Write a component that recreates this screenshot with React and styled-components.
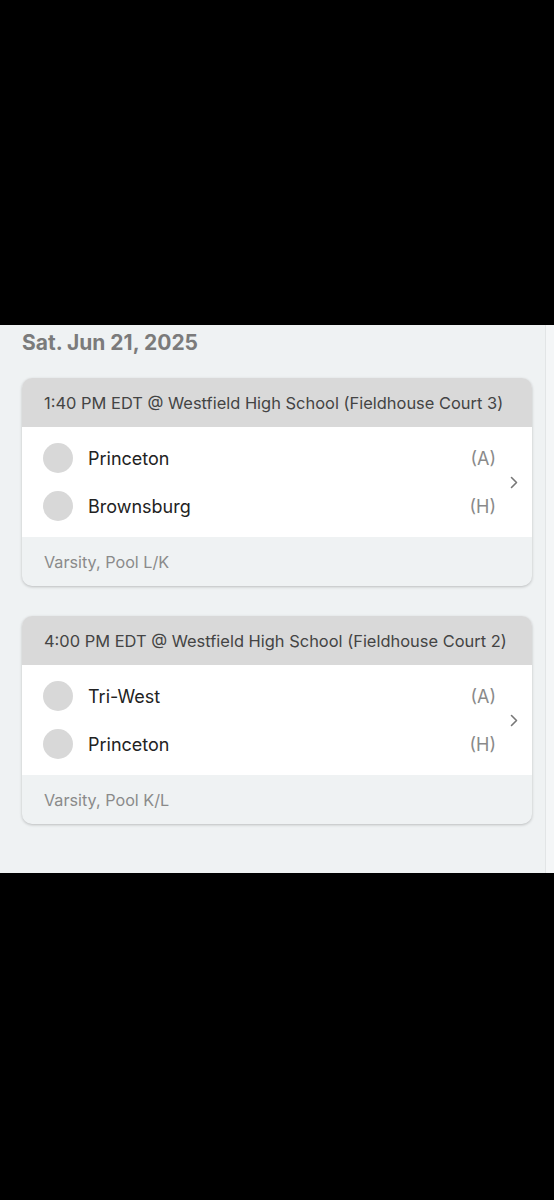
import React from "react";
import styled, { createGlobalStyle } from "styled-components";

const GlobalStyle = createGlobalStyle`
  html, body {
    margin: 0;
    padding: 0;
    background: #000;
  }
  body {
    font-family: 'Inter', 'Lato', sans-serif;
  }
`;

const Screen = styled.div`
  display: flex;
  flex-direction: column;
  height: 1200px;
  background: #000;
`;

const TopBlack = styled.div`
  height: 325px;
  flex-shrink: 0;
`;

const Panel = styled.section`
  display: flex;
  height: 548px;
  background: #eff2f3;
`;

const Content = styled.div`
  flex: 1;
  display: flex;
  flex-direction: column;
  padding: 6px 0 0 22px;
`;

const EdgeStrip = styled.div`
  width: 8px;
  border-left: 1px solid #e2e5e6;
  background: #f4f6f7;
`;

const DateTitle = styled.h2`
  margin: 0 0 23px 0;
  font-size: 21px;
  font-weight: 700;
  color: #7b7b7b;
  line-height: 24px;
`;

const Card = styled.article`
  width: 510px;
  border-radius: 10px;
  overflow: hidden;
  background: #eff2f3;
  box-shadow: 0 1px 3px rgba(0, 0, 0, 0.22);
  margin-bottom: 30px;
`;

const CardHeader = styled.header`
  height: 49px;
  display: flex;
  align-items: center;
  padding-left: 22px;
  background: #d9d9d9;
  color: #444;
  font-size: 16.45px;
  white-space: nowrap;
`;

const CardBody = styled.div`
  display: flex;
  align-items: center;
  background: #fff;
  height: 110px;
`;

const Teams = styled.div`
  flex: 1;
  display: flex;
  flex-direction: column;
  gap: 18px;
  padding-left: 21px;
`;

const TeamRow = styled.div`
  display: flex;
  align-items: center;
  height: 30px;
`;

const Avatar = styled.span`
  width: 30px;
  height: 30px;
  border-radius: 50%;
  background: #d8d8d8;
  flex-shrink: 0;
`;

const TeamName = styled.span`
  flex: 1;
  margin-left: 15px;
  font-size: 18px;
  color: #222;
`;

const Side = styled.span`
  font-size: 18px;
  color: #8a8a8a;
`;

const Chevron = styled.div`
  width: 36px;
  display: flex;
  justify-content: center;
  color: #777;
`;

const CardFooter = styled.footer`
  height: 49px;
  display: flex;
  align-items: center;
  padding-left: 22px;
  color: #8a8a8a;
  font-size: 16.2px;
`;

const games = [
  {
    header: "1:40 PM EDT @ Westfield High School (Fieldhouse Court 3)",
    teams: [
      { name: "Princeton", side: "(A)" },
      { name: "Brownsburg", side: "(H)" },
    ],
    footer: "Varsity, Pool L/K",
  },
  {
    header: "4:00 PM EDT @ Westfield High School (Fieldhouse Court 2)",
    teams: [
      { name: "Tri-West", side: "(A)" },
      { name: "Princeton", side: "(H)" },
    ],
    footer: "Varsity, Pool K/L",
  },
];

const App = () => {
  return (
    <>
      <GlobalStyle />
      <Screen>
        <TopBlack />
        <Panel>
          <Content>
            <DateTitle>Sat. Jun 21, 2025</DateTitle>
            {games.map((g) => (
              <Card key={g.header}>
                <CardHeader>{g.header}</CardHeader>
                <CardBody>
                  <Teams>
                    {g.teams.map((t) => (
                      <TeamRow key={t.name}>
                        <Avatar />
                        <TeamName>{t.name}</TeamName>
                        <Side>{t.side}</Side>
                      </TeamRow>
                    ))}
                  </Teams>
                  <Chevron>
                    <svg width="8" height="13" viewBox="0 0 8 13" fill="none">
                      <path d="M1.5 1.5 L6.5 6.5 L1.5 11.5" stroke="currentColor" strokeWidth="1.6" strokeLinecap="round" strokeLinejoin="round" />
                    </svg>
                  </Chevron>
                </CardBody>
                <CardFooter>{g.footer}</CardFooter>
              </Card>
            ))}
          </Content>
          <EdgeStrip />
        </Panel>
      </Screen>
    </>
  );
};

export default App;
